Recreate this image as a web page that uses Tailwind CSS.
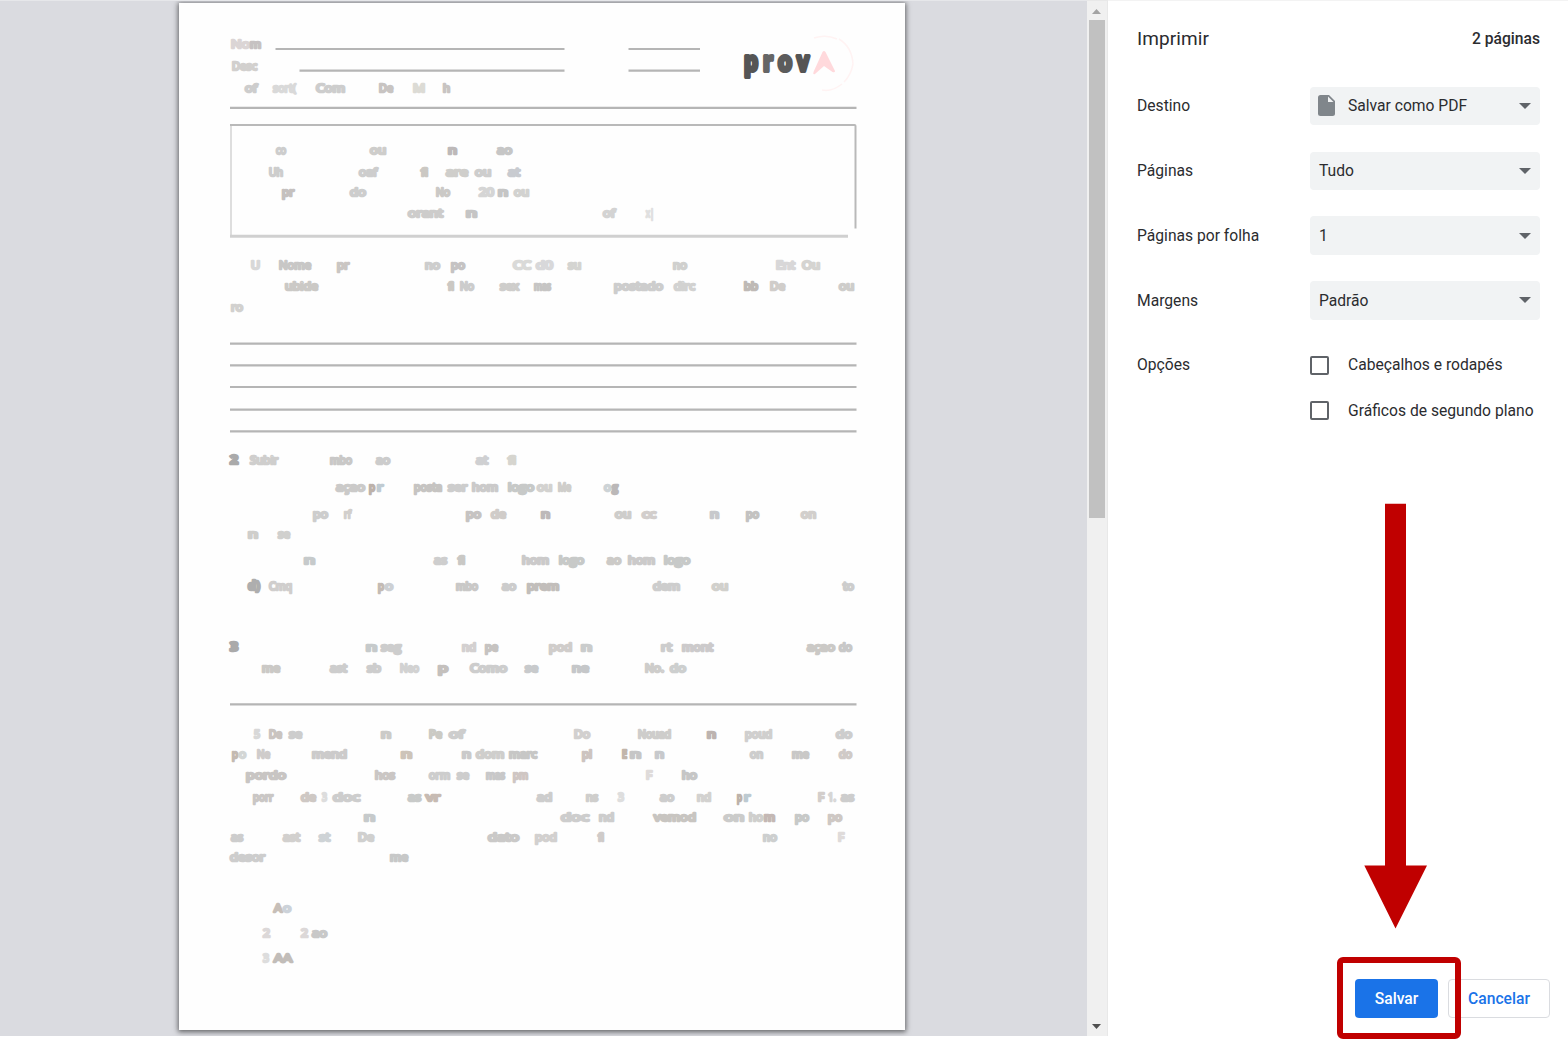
<!DOCTYPE html>
<html lang="pt-BR">
<head>
<meta charset="utf-8">
<title>Imprimir</title>
<script src="https://cdn.jsdelivr.net/npm/@tailwindcss/browser@4"></script>
</head>
<body class="relative flex h-[1039px] w-[1568px] overflow-hidden bg-white font-['Roboto',sans-serif] text-[15.65px] text-[#2b2c2f]">
  <main class="flex h-[1036px] w-[1087px] justify-center overflow-hidden border-t border-[#e6e7ea] bg-[#dadbe0] pt-[2px] pr-[3px]">
    <div class="h-[1027px] w-[726px] bg-[#fefefe] shadow-[0_1px_5px_1px_rgba(0,0,0,0.55)]">
      <svg id="sheet" class="block h-[1027px] w-[726px]" viewBox="179 3 726 1027">
        <g stroke="#b5b5b5" stroke-width="2.2">
          <path d="M275.500 49H564.500M628.500 49H700M299.500 70.700H564.500M628.500 70.700H700M230 107.900H856.500"/>
          <path d="M230 343.700H856.500M230 365.300H856.500M230 387H856.500M230 409.700H856.500M230 431.300H856.500M230 704.300H856.500"/>
        </g>
        <g fill="none">
          <path d="M231 126V236" stroke="#dedede" stroke-width="2"/>
          <path d="M230 236.300H848" stroke="#d0d0d0" stroke-width="3"/>
          <path d="M230 125H854.500Q855.500 125 855.500 126V228.500" stroke="#b9b9b9" stroke-width="2"/>
        </g>
        <g fill="none" stroke="#fff3f3" stroke-width="1.500">
          <path d="M814 38Q826 34 837 39"/>
          <path d="M839 39Q852 47 853 64Q851 75 844 82"/>
          <path d="M842 84Q832 92 822 90"/>
        </g>
        <path d="M822.500 52Q824 50 825.500 52L835 71Q835 73 832.500 72L824 66L815 74Q812.500 75 813.500 72Z" fill="#ffd9dc"/>
        <g id="marks" font-family="Open Sans, Noto Sans, sans-serif" font-size="11.5" stroke-width="2.600" stroke-linejoin="round"></g>
      </svg>
    </div>
  </main>

  <div class="flex h-[1036px] w-[21px] flex-col items-center border-t border-r border-[#e8e8e8] bg-[#f0f0f0]">
    <svg class="mt-[8px] mr-px h-[5px] w-[9px]" viewBox="0 0 9 5"><path d="M0 5L4.500 0L9 5Z" fill="#a3a3a3"/></svg>
    <div class="mt-[6px] mr-px h-[498px] w-4 bg-[#c1c1c1]"></div>
    <svg class="mt-auto mr-px mb-[7px] h-[5px] w-[9px]" viewBox="0 0 9 5"><path d="M0 0L4.500 5L9 0Z" fill="#505050"/></svg>
  </div>

  <aside class="flex h-[1036px] w-[460px] flex-col border-t border-[#f3f3f3] pr-7 pl-[29px]">
    <header class="mt-[23px] flex h-[30px] items-center justify-between">
      <h1 class="text-[19px] tracking-[0.1px]">Imprimir</h1>
      <span class="font-medium">2 páginas</span>
    </header>

    <div class="mt-[32.8px] flex flex-col gap-[26.4px]">
      <div class="flex h-[38.4px] items-center">
        <span class="w-[173px]">Destino</span>
        <div class="flex h-full w-[230px] items-center rounded-[4px] bg-[#f1f3f4] pr-[9px] pl-2">
          <svg class="h-[21px] w-[17px]" viewBox="0 0 17 21"><path d="M2.500 0H11L17 6V18.500Q17 21 14.500 21H2.500Q0 21 0 18.500V2.500Q0 0 2.500 0Z" fill="#80868b"/><path d="M10 1.500V7H15.500Z" fill="#f1f3f4"/></svg>
          <span class="ml-[13px]">Salvar como PDF</span>
          <svg class="ml-auto h-[6px] w-3" viewBox="0 0 12 6"><path d="M0 0H12L6 6Z" fill="#5f6368"/></svg>
        </div>
      </div>
      <div class="flex h-[38.4px] items-center">
        <span class="w-[173px]">Páginas</span>
        <div class="flex h-full w-[230px] items-center justify-between rounded-[4px] bg-[#f1f3f4] pr-[9px] pl-[9px]">
          <span>Tudo</span>
          <svg class="h-[6px] w-3" viewBox="0 0 12 6"><path d="M0 0H12L6 6Z" fill="#5f6368"/></svg>
        </div>
      </div>
      <div class="flex h-[38.4px] items-center">
        <span class="w-[173px]">Páginas por folha</span>
        <div class="flex h-full w-[230px] items-center justify-between rounded-[4px] bg-[#f1f3f4] pr-[9px] pl-[9px]">
          <span>1</span>
          <svg class="h-[6px] w-3" viewBox="0 0 12 6"><path d="M0 0H12L6 6Z" fill="#5f6368"/></svg>
        </div>
      </div>
      <div class="flex h-[38.4px] items-center">
        <span class="w-[173px]">Margens</span>
        <div class="flex h-full w-[230px] items-center justify-between rounded-[4px] bg-[#f1f3f4] pr-[9px] pl-[9px]">
          <span>Padrão</span>
          <svg class="h-[6px] w-3" viewBox="0 0 12 6"><path d="M0 0H12L6 6Z" fill="#5f6368"/></svg>
        </div>
      </div>
      <div class="flex">
        <span class="flex h-[38.4px] w-[173px] items-center">Opções</span>
        <div class="flex flex-col gap-[7.2px]">
          <label class="flex h-[38.4px] items-center gap-[19px]"><span class="h-[19px] w-[19px] rounded-[2px] border-2 border-[#5f6368]"></span><span class="whitespace-nowrap">Cabeçalhos e rodapés</span></label>
          <label class="flex h-[38.4px] items-center gap-[19px]"><span class="h-[19px] w-[19px] rounded-[2px] border-2 border-[#5f6368]"></span><span class="whitespace-nowrap">Gráficos de segundo plano</span></label>
        </div>
      </div>
    </div>

    <footer class="mt-auto -mr-[10px] mb-[18px] flex justify-end gap-[10px] font-medium">
      <button class="h-[39px] w-[83px] rounded-[4px] bg-[#1a73e8] text-white">Salvar</button>
      <button class="h-[39px] w-[102px] rounded-[4px] border border-[#dadce0] text-[#1a73e8]">Cancelar</button>
    </footer>
  </aside>

  <svg class="absolute top-[503px] left-[1364px] h-[426px] w-[63px]" viewBox="0 0 63 426"><path d="M21 .700H42V362.500H63L31.500 425.500L.300 362.500H21Z" fill="#c00000"/></svg>
  <div class="absolute top-[957px] left-[1337px] h-[82px] w-[124px] rounded-[6px] border-6 border-[#c00000]"></div>

  <script>
    // One row per printed line: baseline, then "left,right,text[,colour[,weight]]" for each fragment.
    const rows = [
      [49, '230,251,No,#dbd5d5', '249,262,m,#c6c2c2'],
      [71, '231,258,Desc,#d2d0ce'],
      [92.5, '244,258,of', '272,297,sort(,#d9d9d9', '315,346,Com', '378,394,De,#c8c4c2', '412,426,M,#dcdbd5', '442,451,h,#c8c4c2'],
      [155, '275,287,co', '369,387,ou,#cecdcb', '447,458,n,#bdb9b9', '496,513,ao,#c6c6c6'],
      [176.5, '268,284,Uh', '358,378,oaf', '420,429,fi,#cbc8c3', '445,469,are,#cfcecb', '474,492,ou', '507,521,at,#c8cbd0'],
      [197, '281,295,pr,#c5c1bf', '349,367,do', '435,451,No,#cbc9c6', '478,495,20,#d5d5d5', '497,509,n,#c5c5c5', '513,530,ou,#d2d2d0'],
      [217.5, '407,444,orant,#cdcccb', '465,478,n,#c5c5c5', '602,616,of,#d3d3d3', '645,655,x|,#e0e0e0'],
      [269.500, '250,261,U,#d8d8d8', '278,312,Nome,#c8c7c6', '336,350,pr,#cac6c3', '424,441,no', '450,466,po,#c5c3c3', '512,532,CC,#dadad8', '535,554,d0,#d8d8da', '567,582,su,#d4d4d1', '672,688,no,#d0d0ce', '775,796,Ent,#d8d7d8', '801,821,Ou,#d5d4d1'],
      [290.500, '284,319,ubide,#cbc9c6', '447,455,fi,#cbc8c3', '459,475,No,#cccccc', '499,520,sex,#cecdcb', '533,552,mas,#c6c5c4', '613,664,postado', '673,696,dirc,#d2d2d1', '743,759,bb,#bfbab6', '769,786,De,#d0cdca', '838,855,ou,#cecdcb'],
      [312, '230,244,ro,#d2d1cf'],
      [465, '229,239,2,#aaaaaa,700', '249,279,Subir,#cfcecd', '329,353,mbo,#c9c8c7', '375,391,ao,#cccccc', '475,489,at,#cfd0d2', '507,517,fi,#d6d5cf'],
      [492, '335,366,açao,#cbcac9', '368,376,p,#bdb2aa', '376,384,r,#c0cbd2', '413,443,posta,#c6c4c2', '447,468,ser', '471,499,hom,#cbcaca', '507,535,logo,#c7c9c8', '536,553,ou,#d3d2d0', '557,572,Me,#cfcecb', '603,612,o,#cdd3d6', '611,619,g,#bbb8b8'],
      [518.5, '312,329,po', '343,352,rf,#d2cfcc', '465,482,po,#c6c3c2', '490,507,de,#d0ccc9', '540,551,n,#bdb9b9', '614,632,ou,#cecdcb', '641,657,cc,#d2cecc', '709,720,n,#c7c9cc', '745,760,po,#c3c2c1', '800,817,on,#d2cfcc'],
      [539, '247,259,n,#cfcecb', '277,291,se,#d0d0ce'],
      [564.5, '303,316,n,#c6cacb', '433,448,as,#cecece', '457,466,fi,#c9c8c5', '521,550,hom,#cbcaca', '558,585,logo,#c7c9c8', '606,622,ao,#cccac7', '627,656,hom,#cbcaca', '663,691,logo,#c7c9c8'],
      [591, '247,261,d),#aeaeae,700', '268,293,Cmq,#d0cecd', '377,385,p,#c4bbb4', '384,394,o,#cdd0d4', '455,479,mbo,#c9c8c7', '501,517,ao,#cccccc', '526,560,prem,#c2bebb', '652,681,dem', '711,729,ou,#d1d0cc', '842,855,to'],
      [652, '229,239,3,#aaaaaa,700', '365,378,n,#c6cacb', '380,402,seg', '461,477,nd,#d3d0d0', '484,499,pe,#c6c3c1', '548,573,pod,#d0cdcb', '580,593,n,#cacccc', '660,673,rt,#cdcdcd', '681,714,mont,#cccacb', '806,836,açao,#cbc9c6', '838,853,do,#c8c8c8'],
      [672.5, '261,281,me,#cbc9c6', '329,348,ast', '366,382,sb', '399,420,Neo,#d2d2d2', '437,449,p,#c4c0bd', '469,508,Como', '524,539,se,#c8cacc', '571,590,ne,#c5c7c9', '644,665,No.,#cecdcb', '669,687,do,#cdcfcf'],
      [738.500, '253,261,5,#d8d8d8', '268,283,De,#cac4c0', '288,303,se', '380,392,n,#cccbc8', '428,443,Pe,#cbcac4', '448,465,of', '573,591,Do,#d2d0cf', '637,672,Nouad,#cecdcb', '706,717,n,#bdb4b0', '744,773,poud,#d0cfce', '835,853,do'],
      [759, '231,239,p,#c4bab1', '238,247,o,#d3d6d5', '256,271,Ne,#cfcccb', '311,348,mend,#cccbcb', '400,413,n,#cdc4b9', '461,472,n,#cacaca', '475,505,dom,#cfcecc', '508,538,marc,#c7c7c6', '581,593,pl,#cdc4c0', '621,628,E,#c2b6ab', '629,642,n,#c6c6c6', '654,665,n,#c7c9cc', '749,764,on', '791,810,me,#c9c8c7', '838,853,do,#d0cac7'],
      [779.500, '245,287,pordo,#c8c5c3', '374,396,hos,#cac6c4', '428,451,orm', '456,470,se', '485,506,mas,#c8c8c9', '512,529,pm,#cfc6c3', '645,653,F,#dfdbda', '681,698,ho,#c6c6c6'],
      [801.5, '252,274,porr,#cac7c5', '300,317,de,#cec8c4', '321,328,3,#dddddd', '332,361,doc', '407,422,as,#c8cac9', '425,441,vr,#c7bbb3', '536,553,ad', '585,599,ns,#cfcecc', '617,625,3,#dedede', '659,675,ao', '696,712,nd,#d3d2d0', '736,743,p,#bdb2aa', '743,751,r,#bdcad1', '817,825,F,#d3cecb', '827,837,1.,#d6d6d6', '840,855,as'],
      [821.5, '363,376,n,#c6cacb', '560,590,doc', '598,615,nd', '653,697,vemod,#c8c5c1', '723,745,on,#cbcbca', '748,764,ho,#cfcfcd', '763,776,m,#c4b8b4', '794,810,po,#c7c9c8', '827,843,po,#cec8c4'],
      [842, '230,244,as', '282,301,ast,#d2d0ce', '318,331,st,#ced3d6', '357,375,De,#d0d0cf', '487,520,dato,#cac9c8', '534,558,pod,#d2d0cf', '597,605,fi,#cfcbc9', '762,778,no,#cdcfcf', '837,845,F,#dfdbda'],
      [862, '229,266,desor', '389,409,me,#c7c8c8'],
      [912.5, '273,283,A,#c7bfb8', '282,292,o,#ccd2d9'],
      [938, '262,271,2,#dcd8d8', '300,309,2,#dcd8d8', '311,328,ao,#c8c8c8'],
      [963, '262,270,3,#dddddd', '273,293,AA,#c2bdb9']
    ];
    const marks = document.getElementById('marks');
    const put = (x, r, y, s, c, w, size) => {
      const t = document.createElementNS('http://www.w3.org/2000/svg', 'text');
      t.setAttribute('x', x + 1);
      t.setAttribute('y', y - 0.7);
      t.setAttribute('textLength', r - x - 2);
      t.setAttribute('lengthAdjust', 'spacingAndGlyphs');
      t.setAttribute('fill', c);
      t.setAttribute('stroke', c);
      if (w) t.setAttribute('font-weight', w);
      if (size) { t.setAttribute('font-size', size); t.setAttribute('stroke-width', 4); }
      t.textContent = s;
      marks.appendChild(t);
    };
    for (const [y, ...items] of rows)
      for (const item of items) {
        const [x, r, s, c = '#cdcdcd', w] = item.split(',');
        put(+x, +r, y, s, c, w);
      }
    put(743, 759, 71.5, 'p', '#555555', 700, 26);
    put(762, 774, 71.5, 'r', '#666666', 700, 26);
    put(777, 793, 71.5, 'o', '#5c5c5c', 700, 26);
    put(796, 810, 71.5, 'v', '#555555', 700, 26);
  </script>
</body>
</html>
